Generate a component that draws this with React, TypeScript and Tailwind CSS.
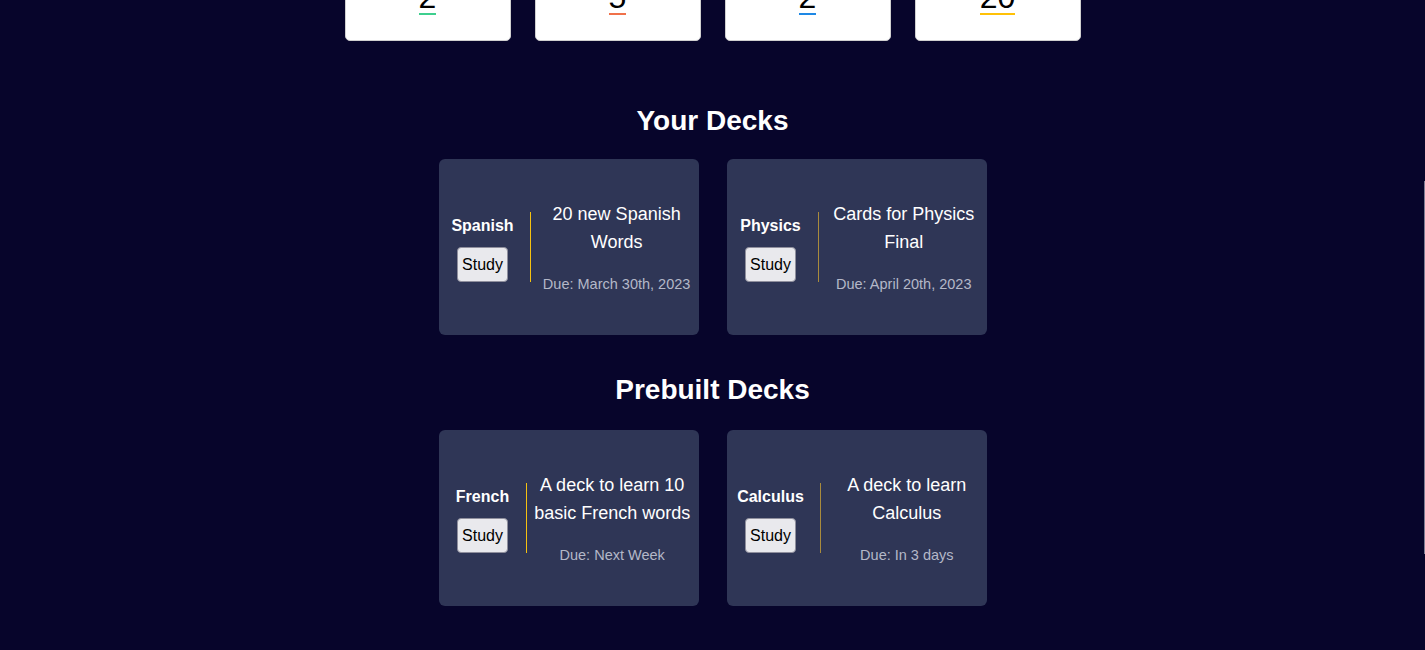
const stats = [
  { label: "Decks", value: "2", bar: "border-[#3ecf8e]" },
  { label: "Cards Due", value: "5", bar: "border-[#f0714a]" },
  { label: "Prebuilt", value: "2", bar: "border-[#1e88e5]" },
  { label: "Cards Studied", value: "20", bar: "border-[#ffc107]" },
];

type Deck = { name: string; title: string; due: string; line: string; lineGap: string; textGap: string };

const yourDecks: Deck[] = [
  { name: "Spanish", title: "20 new Spanish Words", due: "Due: March 30th, 2023", line: "border-[#f5c211]", lineGap: "ml-4", textGap: "ml-1" },
  { name: "Physics", title: "Cards for Physics Final", due: "Due: April 20th, 2023", line: "border-[#a98b3c]", lineGap: "ml-[17px]", textGap: "ml-[3px]" },
];

const prebuiltDecks: Deck[] = [
  { name: "French", title: "A deck to learn 10 basic French words", due: "Due: Next Week", line: "border-[#f5c211]", lineGap: "ml-[17px]", textGap: "ml-[3px]" },
  { name: "Calculus", title: "A deck to learn Calculus", due: "Due: In 3 days", line: "border-[#a98b3c]", lineGap: "ml-4", textGap: "ml-1" },
];

function DeckCard({ deck }: { deck: Deck }) {
  return (
    <div className="w-[260px] h-[176px] rounded-md bg-[#2f3656] flex items-center justify-center pl-[13px]">
      {/* name + study button */}
      <div className="flex flex-col items-center pt-1">
        <span className="text-white font-bold text-base leading-[18px]">{deck.name}</span>
        <button className="mt-3 px-[4px] py-[7px] text-base leading-[19px] text-black bg-[#e9e9ed] border border-[#8f8f9d] rounded-[4px]">
          Study
        </button>
      </div>
      <div className={`${deck.lineGap} w-0 h-[70px] border-l ${deck.line}`} />
      <div className={`${deck.textGap} w-[164px] shrink-0 text-center`}>
        <p className="text-white text-lg leading-7">{deck.title}</p>
        <p className="mt-[18px] text-[14.5px] leading-5 text-[#b4b8c8] whitespace-nowrap">{deck.due}</p>
      </div>
    </div>
  );
}

function Section({ title, decks, top }: { title: string; decks: Deck[]; top: string }) {
  return (
    <section className="flex flex-col items-center">
      <h2 className={`${top} text-white font-bold text-[28px] leading-8`}>{title}</h2>
      <div className="flex gap-7">
        {decks.map((d) => (
          <DeckCard key={d.name} deck={d} />
        ))}
      </div>
    </section>
  );
}

export default function App() {
  return (
    <div className="min-h-screen overflow-hidden bg-[#07052b] font-['Liberation_Sans',Arial,sans-serif]">
      <div className="-mt-[69px] flex flex-col items-center">
        {/* stats row */}
        <div className="flex gap-6">
          {stats.map((s) => (
            <div
              key={s.label}
              className="w-[166px] h-[110px] bg-white border border-[#d0d0d0] rounded-[5px] flex flex-col items-center justify-end pb-[25px]"
            >
              <span className="text-sm text-[#555] mb-2">{s.label}</span>
              <span className={`text-[32px] leading-8 text-black border-b-2 ${s.bar}`}>{s.value}</span>
            </div>
          ))}
        </div>

        <Section title="Your Decks" decks={yourDecks} top="mt-16 mb-[22px]" />
        <Section title="Prebuilt Decks" decks={prebuiltDecks} top="mt-[39px] mb-6" />

        <h2 className="mt-[39px] text-white font-bold text-[28px] leading-8">Statistics</h2>
        <div className="h-40" />
      </div>

      {/* overlay scrollbar track */}
      <div className="fixed right-0 top-[181px] h-[373px] w-px bg-[#7d7d93]" />
    </div>
  );
}
